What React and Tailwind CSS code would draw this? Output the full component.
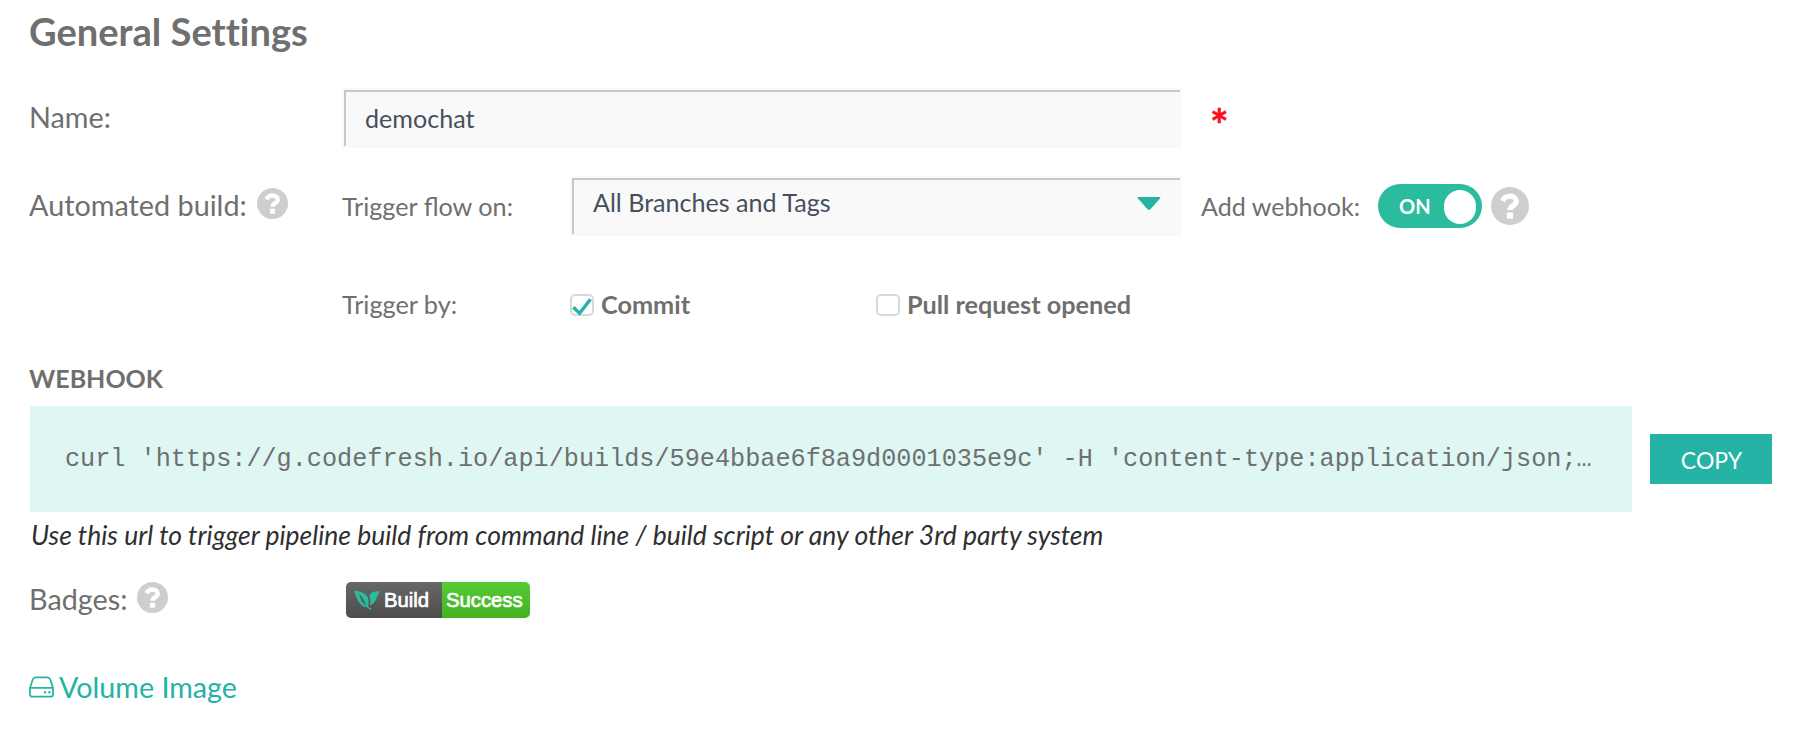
function Help({ className }) {
  return (
    <svg viewBox="0 0 30 30" className={className}>
      <circle cx="15" cy="15" r="15" fill="#cecece" />
      <path d="M9 10.900C10.500 8.300 12.500 7.200 14.900 7.200C17.900 7.200 20 9.200 20 11.300C20 14.800 15 14.600 15 18.200" fill="none" stroke="#fff" strokeWidth="4.300" />
      <rect x="12.500" y="20.200" width="5" height="4.800" rx="0.5" fill="#fff" />
    </svg>
  );
}

function Field({ className, children }) {
  return (
    <div className={`relative h-[60px] bg-[#f9f9f9] text-[#474f5f] text-[25.1px] ${className}`}>
      <div className="absolute top-[2px] left-[2px] right-[2px] bottom-[2px] border-t-2 border-l-2 border-[#c8c8c8]" />
      {children}
    </div>
  );
}

function Box({ checked }) {
  return (
    <svg viewBox="0 0 24 22" className="w-6 h-[22px] shrink-0">
      <rect x="1" y="1" width="22" height="20" rx="4" fill="#fff" stroke="#d9d9d9" strokeWidth="2" />
      {checked && <path d="M3.3 13.2L9.6 19.3L20.5 5.2" fill="none" stroke="#24b3a4" strokeWidth="3.4" />}
    </svg>
  );
}

export default function App() {
  return (
    <main className="w-[1798px] h-[736px] overflow-hidden bg-white font-['Lato',sans-serif] text-[#6f6f6f] pl-[29px] whitespace-nowrap">
      <h1 className="h-[88px] pt-[7px] text-[38.1px] leading-[48px] font-bold [font-variant-ligatures:none]">General Settings</h1>

      <div className="flex h-[60px]">
        <div className="w-[313px] pt-[11px] text-[28.8px] leading-[36px]">Name:</div>
        <Field className="w-[840px] pl-[23px] pt-[13px] leading-[34px]">demochat</Field>
        <div className="pl-[28px] pt-[18px] text-[44px] leading-[36px] font-bold text-[#ff0a1e] [-webkit-text-stroke:0.5px_#ff0a1e]">*</div>
      </div>

      <div className="flex h-[100px] pt-[28px]">
        <div className="w-[313px] flex text-[28.8px]">
          <span className="pt-[11px] leading-[36px]">Automated build:</span>
          <Help className="w-[31px] h-[31px] mt-[12px] ml-[10px]" />
        </div>
        <div className="w-[228px] pt-[13px] text-[25.2px] leading-[34px]">Trigger flow on:</div>
        <Field className="w-[612px] pl-[23px] pt-[9px] leading-[34px]">
          All Branches and Tags
          <svg viewBox="0 0 24 13" className="absolute right-[21px] top-[21px] w-6 h-[13px]">
            <path d="M1.5 0H22.5Q24 0 23 1.6L13.4 12.2Q12 13.4 10.6 12.2L1 1.6Q0 0 1.5 0Z" fill="#24b3a4" />
          </svg>
        </Field>
        <div className="w-[196px] pl-[19px] pt-[13px] text-[25.1px] leading-[34px]">Add webhook:</div>
        <div className="flex items-center justify-between w-[104px] h-[44px] mt-[8px] pl-[21px] pr-[6px] rounded-full bg-[#2bbb9d] text-white text-[20px] font-bold">
          <span>ON</span>
          <span className="w-8 h-[34px] mt-[2px] rounded-full bg-white" />
        </div>
        <Help className="w-[38px] h-[38px] mt-[11px] ml-[9px]" />
      </div>

      <div className="flex items-center h-[34px] mt-[40px] ml-[313px] text-[25.25px]">
        <span className="w-[228px]">Trigger by:</span>
        <span className="w-[306px] flex items-center gap-[7px] font-bold"><Box checked />Commit</span>
        <span className="flex items-center gap-[7px] font-bold"><Box />Pull request opened</span>
      </div>

      <h2 className="mt-[39px] h-[45px] text-[25px] leading-[34px] font-bold">WEBHOOK</h2>
      <div className="flex items-center gap-[18px] pl-px">
        <div className="w-[1602px] h-[106px] pl-[35px] bg-[#def7f3] text-[25.2px] leading-[108px] font-['Liberation_Mono',monospace]">
          curl 'https://g.codefresh.io/api/builds/59e4bbae6f8a9d0001035e9c' -H 'content-type:application/json;…
        </div>
        <button className="w-[122px] h-[50px] bg-[#24b3a4] text-white text-[23px] pt-[2px] pl-[1px]">COPY</button>
      </div>
      <p className="h-[70px] pl-[2px] pt-[6px] text-[26.5px] leading-[34px] italic text-[#2f2f2f] [font-variant-ligatures:none]">
        Use this url to trigger pipeline build from command line / build script or any other 3rd party system
      </p>

      <div className="flex h-[87px]">
        <div className="w-[317px] flex text-[28.8px]">
          <span className="leading-[35px]">Badges:</span>
          <Help className="w-[31px] h-[31px] ml-[10px]" />
        </div>
        <div className="flex w-[184px] h-[36px] rounded-[5px] overflow-hidden font-['Liberation_Sans',sans-serif] text-white text-[20.3px] leading-[36px] [-webkit-text-stroke:0.7px_white]">
          <div className="flex items-center w-[96px] pl-[8px] gap-[4px] bg-linear-to-b from-[#686868] to-[#4c4c4c]">
            <svg viewBox="0 0 26 20" className="w-[26px] h-[20px] shrink-0" fill="#2bbb9d">
              <path fillRule="evenodd" d="M0 0.500C7 1.800 13.500 3.500 14.500 9.500Q15 13 14.200 16.500Q15.500 18 17.500 18.600L16.500 19.800Q14.500 19.200 13.200 17.300C4.500 16.500 3 8 0 0.500ZM5 3.800C6 8.500 8 13 12.500 15.500C10.500 11.500 8.500 7 5 3.800Z" />
              <path d="M26 1C18.500 1.400 15 3 15.700 7Q16.800 10 16 15.500C22.500 13 22.500 6 26 1Z" />
            </svg>
            <span>Build</span>
          </div>
          <div className="w-[88px] pl-[4px] bg-linear-to-b from-[#57cb34] to-[#43b324]">Success</div>
        </div>
      </div>

      <div className="flex text-[28.7px] leading-[36px] text-[#24b3a4] gap-[5px]">
        <svg viewBox="0 0 26 22" className="w-[25px] h-[22px] mt-[7px]" fill="none" stroke="currentColor" strokeWidth="1.800">
          <path d="M1 12L4 3Q4.6 1 7 1H19Q21.400 1 22 3L25 12V18.500Q25 21 22.500 21H3.500Q1 21 1 18.500ZM1 12H25" />
          <path d="M15.500 16.500H18M20 16.500H22.500" strokeWidth="2.200" />
        </svg>
        <span>Volume Image</span>
      </div>
    </main>
  );
}
